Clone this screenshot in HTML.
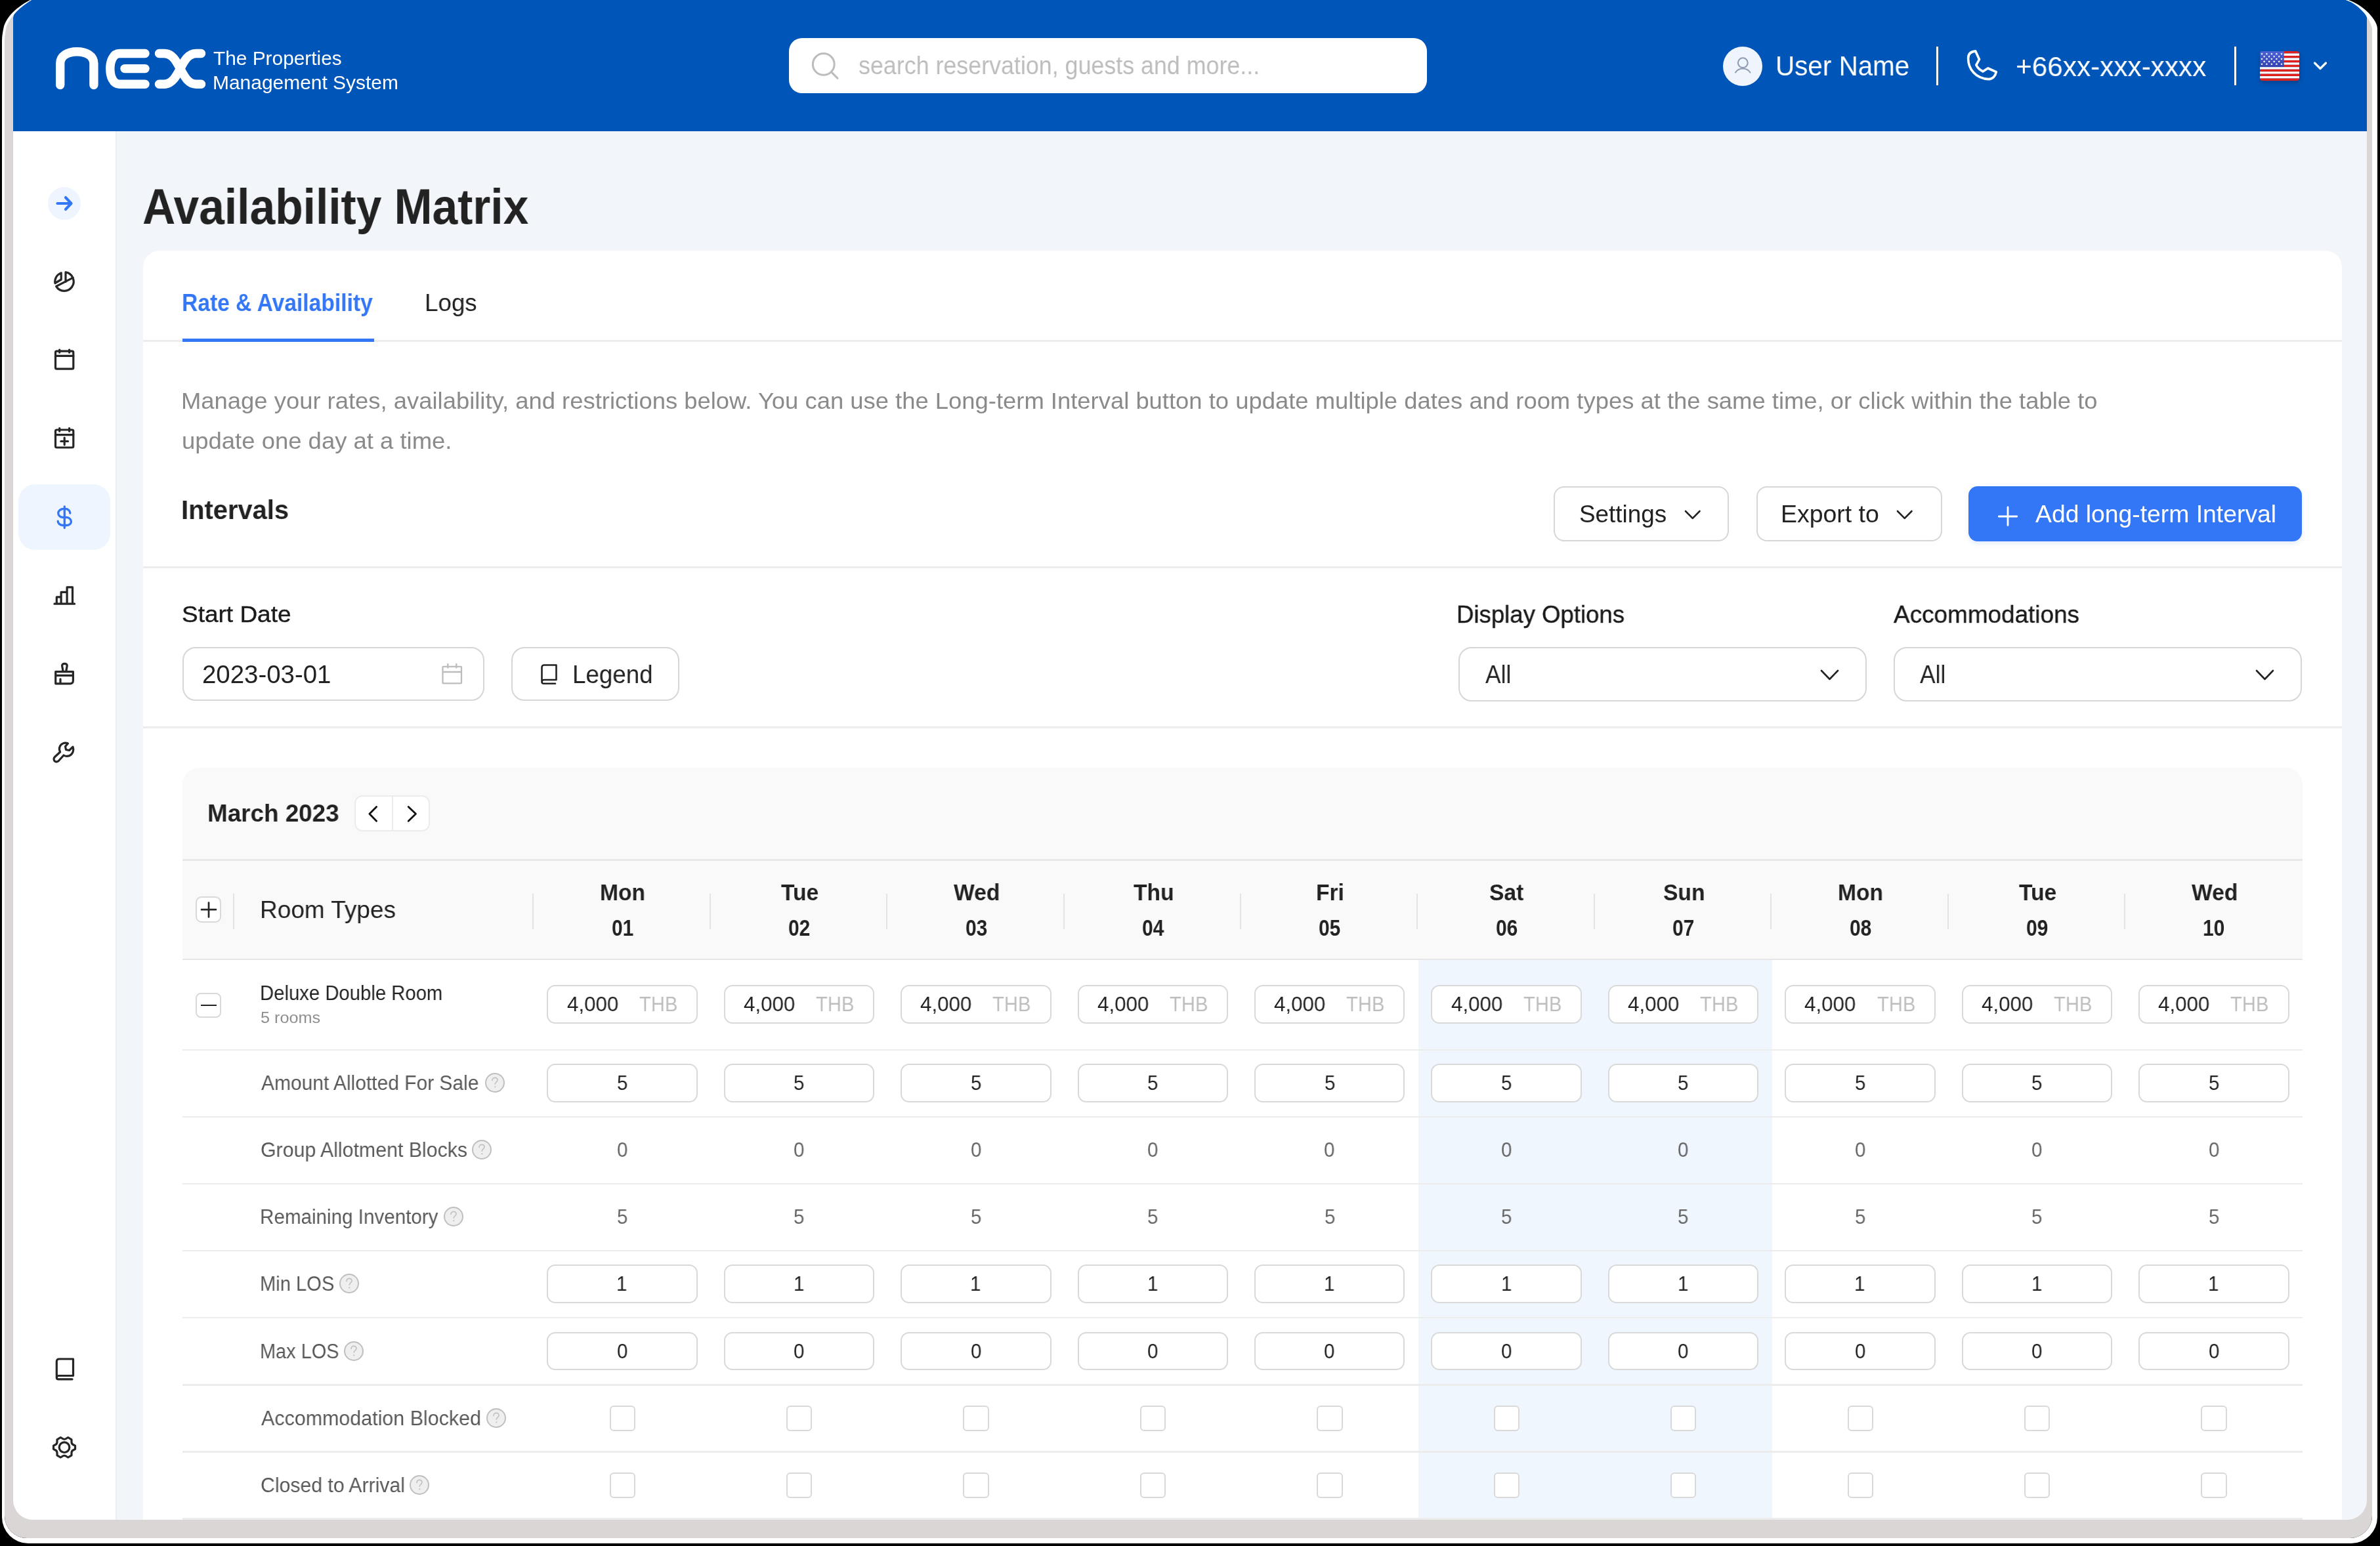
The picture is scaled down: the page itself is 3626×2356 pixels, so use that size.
<!DOCTYPE html>
<html><head><meta charset="utf-8"><style>
html,body{margin:0;padding:0}
body{width:3626px;height:2356px;position:relative;overflow:hidden;background:#000;font-family:"Liberation Sans",sans-serif}
.t{position:absolute;white-space:nowrap;line-height:1;transform-origin:0 0;will-change:transform}
</style></head><body>
<div style="position:absolute;left:20.00px;top:0.00px;width:3586.00px;height:200.00px;background:#0055b8"></div>
<div style="position:absolute;left:20.00px;top:200.00px;width:155.50px;height:2116.00px;background:#fff"></div>
<div style="position:absolute;left:175.50px;top:200.00px;width:2.50px;height:2116.00px;background:#eeeeee"></div>
<div style="position:absolute;left:178.00px;top:200.00px;width:3428.00px;height:2116.00px;background:#f2f5f9"></div>
<svg style="position:absolute;left:0;top:0" width="340" height="200" viewBox="0 0 340 200">
<g fill="none" stroke="#fff" stroke-width="13.4" stroke-linecap="round" stroke-linejoin="round">
<path d="M91.7 129.5 V97 C91.7 85 103 78.7 117.2 78.7 C131.5 78.7 142.9 85 142.9 97 V129.5"/>
<path d="M221 81.5 H182 C172 81.5 167.8 94 167.8 104.8 C167.8 116 172 128.2 182 128.2 H221"/>
<path d="M190 104.6 H221"/>
<path d="M242.5 81.5 H250 C262 81.5 268 92 274.6 104.8 C281 117 287 128.2 299 128.2 H306.5"/>
<path d="M306.5 81.5 H299 C287 81.5 281 92 274.6 104.8 C268 117 262 128.2 250 128.2 H242.5"/>
</g></svg>
<div class="t" style="left:325.49px;top:73.82px;font-size:29.28px;color:#fff;transform:scaleX(1.0197);">The Properties</div>
<div class="t" style="left:323.70px;top:110.82px;font-size:29.28px;color:#fff;transform:scaleX(1.0230);">Management System</div>
<div style="position:absolute;left:1202.00px;top:58.00px;width:972.00px;height:84.00px;background:#fff;border-radius:20px"></div>
<svg style="position:absolute;left:1230px;top:74px" width="54" height="54" viewBox="0 0 54 54">
<circle cx="24.75" cy="23.9" r="16.4" fill="none" stroke="#bdbdbd" stroke-width="3.1"/>
<path d="M36.4 35.6 L45.9 45.1" stroke="#bdbdbd" stroke-width="3.1" stroke-linecap="round"/></svg>
<div class="t" style="left:1307.57px;top:81.26px;font-size:38.41px;color:#bdbdbd;transform:scaleX(0.9326);">search reservation, guests and more...</div>
<div style="position:absolute;left:2625.30px;top:70.50px;width:60.00px;height:60.00px;background:#f0f4fd;border-radius:50%"></div>
<svg style="position:absolute;left:2635px;top:80px" width="40" height="40" viewBox="0 0 40 40">
<circle cx="20.3" cy="15.7" r="7.4" fill="none" stroke="#8e9db0" stroke-width="2.1"/>
<path d="M9 30.5 C12 26 15.5 24.5 20.3 24.5 C25 24.5 28.5 26 31.5 30.5" fill="none" stroke="#8e9db0" stroke-width="2.1" stroke-linecap="round"/></svg>
<div class="t" style="left:2705.08px;top:80.48px;font-size:42.03px;color:#fff;transform:scaleX(0.9612);">User Name</div>
<div style="position:absolute;left:2949.50px;top:71.00px;width:3.00px;height:59.00px;background:#fff"></div>
<svg style="position:absolute;left:2980px;top:60px" width="100" height="80" viewBox="0 0 100 80">
<path d="M29.8 17.9 L35.5 30.5 L30.8 39.1 C33 44 37 47 40.9 48.9 L48.7 44 L61.3 49.7 C60 56 56 60.6 49.7 60.6 C30 60 18.6 45 18.6 29 C18.6 22 23 18.5 29.8 17.9 Z" fill="none" stroke="#fff" stroke-width="3.6" stroke-linejoin="round"/></svg>
<div class="t" style="left:3070.82px;top:79.56px;font-size:42.75px;color:#fff;transform:scaleX(0.9895);">+66xx-xxx-xxxx</div>
<div style="position:absolute;left:3403.50px;top:71.00px;width:3.00px;height:59.00px;background:#fff"></div>
<div style="position:absolute;left:3443px;top:78px;width:60px;height:45px;border-radius:4px;overflow:hidden;box-shadow:0 3px 6px rgba(0,0,0,0.25)">
<svg width="60" height="45" viewBox="0 0 60 45"><rect x="0" y="0.000" width="60" height="3.512" fill="#e0201c"/><rect x="0" y="3.462" width="60" height="3.512" fill="#fff"/><rect x="0" y="6.923" width="60" height="3.512" fill="#e0201c"/><rect x="0" y="10.385" width="60" height="3.512" fill="#fff"/><rect x="0" y="13.846" width="60" height="3.512" fill="#e0201c"/><rect x="0" y="17.308" width="60" height="3.512" fill="#fff"/><rect x="0" y="20.769" width="60" height="3.512" fill="#e0201c"/><rect x="0" y="24.231" width="60" height="3.512" fill="#fff"/><rect x="0" y="27.692" width="60" height="3.512" fill="#e0201c"/><rect x="0" y="31.154" width="60" height="3.512" fill="#fff"/><rect x="0" y="34.615" width="60" height="3.512" fill="#e0201c"/><rect x="0" y="38.077" width="60" height="3.512" fill="#fff"/><rect x="0" y="41.538" width="60" height="3.512" fill="#e0201c"/><defs><linearGradient id="cg" x1="0" y1="0" x2="0" y2="1"><stop offset="0" stop-color="#4b62d4"/><stop offset="1" stop-color="#3542b0"/></linearGradient></defs><rect x="0" y="0" width="36.7" height="24" fill="url(#cg)"/><polygon points="3.00,2.30 3.50,3.51 4.81,3.61 3.81,4.46 4.12,5.74 3.00,5.05 1.88,5.74 2.19,4.46 1.19,3.61 2.50,3.51" fill="#fff"/><polygon points="10.40,2.30 10.90,3.51 12.21,3.61 11.21,4.46 11.52,5.74 10.40,5.05 9.28,5.74 9.59,4.46 8.59,3.61 9.90,3.51" fill="#fff"/><polygon points="17.90,2.30 18.40,3.51 19.71,3.61 18.71,4.46 19.02,5.74 17.90,5.05 16.78,5.74 17.09,4.46 16.09,3.61 17.40,3.51" fill="#fff"/><polygon points="25.40,2.30 25.90,3.51 27.21,3.61 26.21,4.46 26.52,5.74 25.40,5.05 24.28,5.74 24.59,4.46 23.59,3.61 24.90,3.51" fill="#fff"/><polygon points="33.00,2.30 33.50,3.51 34.81,3.61 33.81,4.46 34.12,5.74 33.00,5.05 31.88,5.74 32.19,4.46 31.19,3.61 32.50,3.51" fill="#fff"/><polygon points="6.60,6.20 7.10,7.41 8.41,7.51 7.41,8.36 7.72,9.64 6.60,8.96 5.48,9.64 5.79,8.36 4.79,7.51 6.10,7.41" fill="#fff"/><polygon points="14.10,6.20 14.60,7.41 15.91,7.51 14.91,8.36 15.22,9.64 14.10,8.96 12.98,9.64 13.29,8.36 12.29,7.51 13.60,7.41" fill="#fff"/><polygon points="21.70,6.20 22.20,7.41 23.51,7.51 22.51,8.36 22.82,9.64 21.70,8.96 20.58,9.64 20.89,8.36 19.89,7.51 21.20,7.41" fill="#fff"/><polygon points="29.20,6.20 29.70,7.41 31.01,7.51 30.01,8.36 30.32,9.64 29.20,8.96 28.08,9.64 28.39,8.36 27.39,7.51 28.70,7.41" fill="#fff"/><polygon points="3.00,10.00 3.50,11.21 4.81,11.31 3.81,12.16 4.12,13.44 3.00,12.76 1.88,13.44 2.19,12.16 1.19,11.31 2.50,11.21" fill="#fff"/><polygon points="10.40,10.00 10.90,11.21 12.21,11.31 11.21,12.16 11.52,13.44 10.40,12.76 9.28,13.44 9.59,12.16 8.59,11.31 9.90,11.21" fill="#fff"/><polygon points="17.90,10.00 18.40,11.21 19.71,11.31 18.71,12.16 19.02,13.44 17.90,12.76 16.78,13.44 17.09,12.16 16.09,11.31 17.40,11.21" fill="#fff"/><polygon points="25.40,10.00 25.90,11.21 27.21,11.31 26.21,12.16 26.52,13.44 25.40,12.76 24.28,13.44 24.59,12.16 23.59,11.31 24.90,11.21" fill="#fff"/><polygon points="33.00,10.00 33.50,11.21 34.81,11.31 33.81,12.16 34.12,13.44 33.00,12.76 31.88,13.44 32.19,12.16 31.19,11.31 32.50,11.21" fill="#fff"/><polygon points="6.60,13.90 7.10,15.11 8.41,15.21 7.41,16.06 7.72,17.34 6.60,16.66 5.48,17.34 5.79,16.06 4.79,15.21 6.10,15.11" fill="#fff"/><polygon points="14.10,13.90 14.60,15.11 15.91,15.21 14.91,16.06 15.22,17.34 14.10,16.66 12.98,17.34 13.29,16.06 12.29,15.21 13.60,15.11" fill="#fff"/><polygon points="21.70,13.90 22.20,15.11 23.51,15.21 22.51,16.06 22.82,17.34 21.70,16.66 20.58,17.34 20.89,16.06 19.89,15.21 21.20,15.11" fill="#fff"/><polygon points="29.20,13.90 29.70,15.11 31.01,15.21 30.01,16.06 30.32,17.34 29.20,16.66 28.08,17.34 28.39,16.06 27.39,15.21 28.70,15.11" fill="#fff"/><polygon points="3.00,17.70 3.50,18.91 4.81,19.01 3.81,19.86 4.12,21.14 3.00,20.46 1.88,21.14 2.19,19.86 1.19,19.01 2.50,18.91" fill="#fff"/><polygon points="10.40,17.70 10.90,18.91 12.21,19.01 11.21,19.86 11.52,21.14 10.40,20.46 9.28,21.14 9.59,19.86 8.59,19.01 9.90,18.91" fill="#fff"/><polygon points="17.90,17.70 18.40,18.91 19.71,19.01 18.71,19.86 19.02,21.14 17.90,20.46 16.78,21.14 17.09,19.86 16.09,19.01 17.40,18.91" fill="#fff"/><polygon points="25.40,17.70 25.90,18.91 27.21,19.01 26.21,19.86 26.52,21.14 25.40,20.46 24.28,21.14 24.59,19.86 23.59,19.01 24.90,18.91" fill="#fff"/><polygon points="33.00,17.70 33.50,18.91 34.81,19.01 33.81,19.86 34.12,21.14 33.00,20.46 31.88,21.14 32.19,19.86 31.19,19.01 32.50,18.91" fill="#fff"/></svg></div>
<svg style="position:absolute;left:3520px;top:88px" width="30" height="24" viewBox="0 0 30 24">
<path d="M6.5 8 L15 16.5 L23.5 8" fill="none" stroke="#fff" stroke-width="3.2" stroke-linecap="round" stroke-linejoin="round"/></svg>
<div style="position:absolute;left:73.30px;top:285.00px;width:50.00px;height:50.00px;background:#eef5fe;border-radius:50%"></div>
<svg style="position:absolute;left:78px;top:290px" width="40" height="40" viewBox="0 0 40 40">
<path d="M9.5 20 H30.5 M22 11 L30.5 20 L22 29" fill="none" stroke="#3377f6" stroke-width="4.2" stroke-linecap="round" stroke-linejoin="round"/></svg>
<svg style="position:absolute;left:74px;top:405px" width="48" height="48" viewBox="0 0 48 48"><g fill="none" stroke="#262626" stroke-width="3.2" stroke-linecap="round" stroke-linejoin="round"><path d="M26 9.9 A14.3 14.3 0 1 1 11.6 31.4 L37.3 18.1 M26 9.9 V24.4"/><path d="M19.2 10.9 V21 L9.9 26.5 A14.3 14.3 0 0 1 19.2 10.9 Z"/></g></svg>
<svg style="position:absolute;left:74px;top:524px" width="48" height="48" viewBox="0 0 48 48"><g fill="none" stroke="#262626" stroke-width="3.2" stroke-linecap="round" stroke-linejoin="round"><rect x="10.5" y="11.2" width="27.3" height="27" rx="2"/><path d="M10.5 18.4 H37.8 M16.7 9 V13.2 M31.6 9 V13.2"/></g></svg>
<svg style="position:absolute;left:74px;top:644px" width="48" height="48" viewBox="0 0 48 48"><g fill="none" stroke="#262626" stroke-width="3.2" stroke-linecap="round" stroke-linejoin="round"><rect x="10.5" y="11" width="27.3" height="27" rx="2"/><path d="M10.5 18.6 H37.8 M16.7 8.6 V13.2 M31.6 8.6 V13.2 M24.2 23.2 V33.8 M18.8 28.5 H29.6"/></g></svg>
<div style="position:absolute;left:28.00px;top:738.00px;width:140.00px;height:100.00px;background:#eef5fe;border-radius:26px"></div>
<svg style="position:absolute;left:74px;top:764px" width="48" height="48" viewBox="0 0 48 48"><g fill="none" stroke="#3377f6" stroke-width="3.3" stroke-linecap="round" stroke-linejoin="round">
<path d="M32.8 18.1 C32.8 14.4 29.5 11.4 25.6 11.4 H23 C18.6 11.4 14.7 14.4 14.7 18.1 C14.7 21.6 18 24.3 21.2 24.3 H27.4 C31.2 24.3 34.4 27.5 34.4 31 C34.4 34.2 31.2 36.5 27.4 36.5 H21.2 C17.5 36.5 14.2 33.5 14.2 30.2 M24.3 7.8 V40.5"/></g></svg>
<svg style="position:absolute;left:74px;top:883px" width="48" height="48" viewBox="0 0 48 48"><g fill="none" stroke="#262626" stroke-width="3.2" stroke-linecap="round" stroke-linejoin="round"><path d="M9 37.2 H39.5 M12.3 37.2 V26.9 H19.1 V37.2 M19.1 37.2 V19.4 H28.1 V37.2 M28.1 37.2 V11.9 H36.5 V37.2"/></g></svg>
<svg style="position:absolute;left:74px;top:1002px" width="48" height="48" viewBox="0 0 48 48"><g fill="none" stroke="#262626" stroke-width="3.2" stroke-linecap="round" stroke-linejoin="round"><path d="M10.7 21.6 H37.4 V35.3 C37.4 38 35.6 39.8 33 39.8 H10.7 Z M10.7 27.3 H37.4 M18 39.8 V32.8 M22.2 21.6 L20.6 12.8 C20.4 10.5 22 9.3 24.4 9.3 C26.8 9.3 28.4 10.5 28.2 12.8 L26.6 21.6"/></g></svg>
<svg style="position:absolute;left:74px;top:1122px" width="48" height="48" viewBox="0 0 48 48"><g fill="none" stroke="#262626" stroke-width="3.2" stroke-linecap="round" stroke-linejoin="round"><path d="M29.5 11 C24.5 9 19 11 17 16 C16 18.8 16.3 21.5 17.6 24 L9.5 31.5 C7.5 33.3 7.5 36 9.3 37.8 C11 39.5 13.8 39.3 15.5 37.3 L23 29 C25.5 30.5 29 30.8 32 29.5 C37 27.2 39 21 37 16.2 L31.5 21.5 L26.5 20.5 L25.5 15.5 Z"/></g></svg>
<svg style="position:absolute;left:74px;top:2062px" width="48" height="48" viewBox="0 0 48 48"><g fill="none" stroke="#262626" stroke-width="3.2" stroke-linecap="round" stroke-linejoin="round"><path d="M12.3 37 V12.5 C12.3 10.5 14 9 16 9 H37.5 V34.5 H15.5 C13.5 34.5 12.3 35.8 12.3 37.5 C12.3 39 13.5 39.8 15 39.8 H36"/></g></svg>
<svg style="position:absolute;left:74px;top:2182px" width="48" height="48" viewBox="0 0 48 48"><g fill="none" stroke="#262626" stroke-width="3.2" stroke-linecap="round" stroke-linejoin="round"><circle cx="24" cy="23.7" r="7.8"/><path d="M18.3 8.5 L21.5 10.5 Q24 12 26.5 10.5 L29.7 8.5 L35 11.8 L35 15.5 Q35 18.3 37.3 19.5 L40.5 21.2 V26.3 L37.3 28 Q35 29.3 35 32 L35 35.8 L29.7 39 L26.5 37 Q24 35.5 21.5 37 L18.3 39 L13 35.8 L13 32 Q13 29.3 10.7 28 L7.5 26.3 V21.2 L10.7 19.5 Q13 18.3 13 15.5 L13 11.8 Z"/></g></svg>
<div class="t" style="left:217.49px;top:276.11px;font-size:76.81px;color:#222;font-weight:700;transform:scaleX(0.9048);">Availability Matrix</div>
<div style="position:absolute;left:218.00px;top:381.50px;width:3350.00px;height:2018.50px;background:#fff;border-radius:25px"></div>
<div class="t" style="left:276.77px;top:443.37px;font-size:37.68px;color:#3377f6;font-weight:700;transform:scaleX(0.8920);">Rate &amp; Availability</div>
<div class="t" style="left:647.47px;top:443.37px;font-size:37.68px;color:#222;transform:scaleX(0.9755);">Logs</div>
<div style="position:absolute;left:218.00px;top:518.00px;width:3350.00px;height:3.00px;background:#ececec"></div>
<div style="position:absolute;left:278.00px;top:516.30px;width:291.50px;height:5.00px;background:#3377f6"></div>
<div class="t" style="left:276.12px;top:594.43px;font-size:34.78px;color:#8a8a8a;transform:scaleX(1.0472);">Manage your rates, availability, and restrictions below. You can use the Long-term Interval button to update multiple dates and room types at the same time, or click within the table to</div>
<div class="t" style="left:276.64px;top:654.83px;font-size:34.78px;color:#8a8a8a;transform:scaleX(1.0487);">update one day at a time.</div>
<div class="t" style="left:276.35px;top:756.79px;font-size:41.30px;color:#222;font-weight:700;transform:scaleX(0.9652);">Intervals</div>
<div style="position:absolute;left:2366.60px;top:741.30px;width:267.70px;height:83.60px;border:2.5px solid #d6d6d6;border-radius:16px;box-sizing:border-box;background:#fff"></div>
<div class="t" style="left:2405.82px;top:765.90px;font-size:36.23px;color:#222;transform:scaleX(1.0176);">Settings</div>
<svg style="position:absolute;left:2563.6px;top:774.7px" width="29.5" height="18.8" viewBox="0 0 29.5 18.8"><path d="M4 4 L14.75 14.8 L25.5 4" fill="none" stroke="#222" stroke-width="2.6" stroke-linecap="round" stroke-linejoin="round"/></svg>
<div style="position:absolute;left:2675.80px;top:741.30px;width:282.90px;height:83.60px;border:2.5px solid #d6d6d6;border-radius:16px;box-sizing:border-box;background:#fff"></div>
<div class="t" style="left:2712.90px;top:765.90px;font-size:36.23px;color:#222;transform:scaleX(1.0337);">Export to</div>
<svg style="position:absolute;left:2887.4px;top:774.7px" width="29.5" height="18.8" viewBox="0 0 29.5 18.8"><path d="M4 4 L14.75 14.8 L25.5 4" fill="none" stroke="#222" stroke-width="2.6" stroke-linecap="round" stroke-linejoin="round"/></svg>
<div style="position:absolute;left:2999.00px;top:741.30px;width:508.00px;height:83.60px;background:#3377f6;border-radius:14px;box-shadow:0 4px 6px rgba(51,119,246,0.12)"></div>
<svg style="position:absolute;left:3041px;top:768.5px" width="36" height="36" viewBox="0 0 36 36"><path d="M18 4 V31.5 M4.3 18 H31.8" stroke="#fff" stroke-width="2.8" stroke-linecap="round"/></svg>
<div class="t" style="left:3101.00px;top:765.90px;font-size:36.23px;color:#fff;transform:scaleX(1.0303);">Add long-term Interval</div>
<div style="position:absolute;left:218.00px;top:863.00px;width:3350.00px;height:2.50px;background:#ececec"></div>
<div class="t" style="left:277.14px;top:918.52px;font-size:35.51px;color:#1a1a1a;transform:scaleX(1.0418);-webkit-text-stroke:0.4px #1a1a1a;">Start Date</div>
<div style="position:absolute;left:278.30px;top:985.90px;width:459.50px;height:82.40px;border:2.5px solid #d6d6d6;border-radius:20px;box-sizing:border-box;background:#fff"></div>
<div class="t" style="left:307.69px;top:1008.88px;font-size:38.26px;color:#222;transform:scaleX(1.0042);">2023-03-01</div>
<svg style="position:absolute;left:668px;top:1006px" width="42" height="42" viewBox="0 0 42 42"><g fill="none" stroke="#bdbdbd" stroke-width="2.3"><rect x="6.5" y="9.8" width="28.5" height="25.5" rx="0.8"/><path d="M6.5 18 H35 M14.3 5 V12.5 M27.3 5 V12.5"/></g></svg>
<div style="position:absolute;left:779.40px;top:985.90px;width:255.20px;height:82.40px;border:2.5px solid #d6d6d6;border-radius:20px;box-sizing:border-box;background:#fff"></div>
<svg style="position:absolute;left:820px;top:1008px" width="34" height="40" viewBox="0 0 34 40"><g fill="none" stroke="#222" stroke-width="2.6" stroke-linecap="round" stroke-linejoin="round"><path d="M5.5 31 V9 C5.5 7 7 5.5 9 5.5 H27.5 V28 H9 C7 28 5.5 29.3 5.5 31 C5.5 32.8 7 33.8 8.5 33.8 H26"/></g></svg>
<div class="t" style="left:872.12px;top:1008.88px;font-size:38.26px;color:#222;transform:scaleX(0.9615);">Legend</div>
<div class="t" style="left:2219.49px;top:917.67px;font-size:37.68px;color:#1a1a1a;transform:scaleX(0.9704);-webkit-text-stroke:0.4px #1a1a1a;">Display Options</div>
<div style="position:absolute;left:2222.40px;top:985.90px;width:621.60px;height:83.50px;border:2.5px solid #d6d6d6;border-radius:20px;box-sizing:border-box;background:#fff"></div>
<div class="t" style="left:2263.00px;top:1008.68px;font-size:38.26px;color:#222;transform:scaleX(0.9250);">All</div>
<svg style="position:absolute;left:2771.1px;top:1017.5px" width="33" height="21" viewBox="0 0 33 21"><path d="M4 4 L16.5 17 L29 4" fill="none" stroke="#222" stroke-width="2.6" stroke-linecap="round" stroke-linejoin="round"/></svg>
<div class="t" style="left:2885.30px;top:917.67px;font-size:37.68px;color:#1a1a1a;transform:scaleX(0.9794);-webkit-text-stroke:0.4px #1a1a1a;">Accommodations</div>
<div style="position:absolute;left:2885.30px;top:985.90px;width:621.70px;height:83.50px;border:2.5px solid #d6d6d6;border-radius:20px;box-sizing:border-box;background:#fff"></div>
<div class="t" style="left:2925.30px;top:1008.68px;font-size:38.26px;color:#222;transform:scaleX(0.9250);">All</div>
<svg style="position:absolute;left:3434.0px;top:1017.5px" width="33" height="21" viewBox="0 0 33 21"><path d="M4 4 L16.5 17 L29 4" fill="none" stroke="#222" stroke-width="2.6" stroke-linecap="round" stroke-linejoin="round"/></svg>
<div style="position:absolute;left:218.00px;top:1107.00px;width:3350.00px;height:2.50px;background:#ececec"></div>
<div style="position:absolute;left:278.00px;top:1169.70px;width:3229.70px;height:292.30px;background:#f9f9f9;border-radius:25px 25px 0 0"></div>
<div class="t" style="left:316.06px;top:1221.07px;font-size:37.68px;color:#222;font-weight:700;transform:scaleX(0.9777);">March 2023</div>
<div style="position:absolute;left:540.30px;top:1211.50px;width:114.70px;height:55.50px;background:#fff;border:2.2px solid #ececec;border-radius:12px;box-sizing:border-box"></div>
<div style="position:absolute;left:596.90px;top:1213.00px;width:2.00px;height:52.50px;background:#ececec"></div>
<svg style="position:absolute;left:554px;top:1222px" width="28" height="38" viewBox="0 0 28 38"><path d="M19.6 7.4 L8.9 18.3 L19.6 29.2" fill="none" stroke="#111" stroke-width="2.8" stroke-linecap="round" stroke-linejoin="round"/></svg>
<svg style="position:absolute;left:613.5px;top:1222px" width="28" height="38" viewBox="0 0 28 38"><path d="M8.2 7.4 L19.5 18.3 L8.2 29.2" fill="none" stroke="#111" stroke-width="2.8" stroke-linecap="round" stroke-linejoin="round"/></svg>
<div style="position:absolute;left:278.00px;top:1309.00px;width:3229.70px;height:2.50px;background:#e8e8e8"></div>
<div style="position:absolute;left:297.80px;top:1366.30px;width:39.10px;height:39.50px;background:#fff;border:2.3px solid #d9d9d9;border-radius:9px;box-sizing:border-box"></div>
<svg style="position:absolute;left:298.5px;top:1367px" width="38" height="38" viewBox="0 0 38 38"><path d="M19 8.5 V30.5 M8 19.2 H30" stroke="#262626" stroke-width="2.7" stroke-linecap="round"/></svg>
<div style="position:absolute;left:355.00px;top:1362.00px;width:2.00px;height:54.00px;background:#e3e3e3"></div>
<div class="t" style="left:395.55px;top:1368.07px;font-size:37.68px;color:#222;transform:scaleX(0.9819);">Room Types</div>
<div style="position:absolute;left:811.35px;top:1362.00px;width:2.00px;height:54.00px;background:#e3e3e3"></div>
<div style="position:absolute;left:1080.77px;top:1362.00px;width:2.00px;height:54.00px;background:#e3e3e3"></div>
<div style="position:absolute;left:1350.19px;top:1362.00px;width:2.00px;height:54.00px;background:#e3e3e3"></div>
<div style="position:absolute;left:1619.61px;top:1362.00px;width:2.00px;height:54.00px;background:#e3e3e3"></div>
<div style="position:absolute;left:1889.03px;top:1362.00px;width:2.00px;height:54.00px;background:#e3e3e3"></div>
<div style="position:absolute;left:2158.45px;top:1362.00px;width:2.00px;height:54.00px;background:#e3e3e3"></div>
<div style="position:absolute;left:2427.87px;top:1362.00px;width:2.00px;height:54.00px;background:#e3e3e3"></div>
<div style="position:absolute;left:2697.29px;top:1362.00px;width:2.00px;height:54.00px;background:#e3e3e3"></div>
<div style="position:absolute;left:2966.71px;top:1362.00px;width:2.00px;height:54.00px;background:#e3e3e3"></div>
<div style="position:absolute;left:3236.13px;top:1362.00px;width:2.00px;height:54.00px;background:#e3e3e3"></div>
<div style="position:absolute;left:2160.75px;top:1463.00px;width:538.84px;height:853.00px;background:#eff6fe"></div>
<div class="t" style="left:914.00px;top:1341.64px;font-size:35.36px;color:#222;font-weight:700;transform:scaleX(0.9500);">Mon</div>
<div class="t" style="left:931.55px;top:1396.60px;font-size:35.65px;color:#222;font-weight:700;transform:scaleX(0.8400);">01</div>
<div class="t" style="left:1189.84px;top:1341.64px;font-size:35.36px;color:#222;font-weight:700;transform:scaleX(0.9500);">Tue</div>
<div class="t" style="left:1201.18px;top:1396.60px;font-size:35.65px;color:#222;font-weight:700;transform:scaleX(0.8400);">02</div>
<div class="t" style="left:1453.44px;top:1341.64px;font-size:35.36px;color:#222;font-weight:700;transform:scaleX(0.9500);">Wed</div>
<div class="t" style="left:1470.60px;top:1396.60px;font-size:35.65px;color:#222;font-weight:700;transform:scaleX(0.8400);">03</div>
<div class="t" style="left:1727.13px;top:1341.64px;font-size:35.36px;color:#222;font-weight:700;transform:scaleX(0.9500);">Thu</div>
<div class="t" style="left:1739.50px;top:1396.60px;font-size:35.65px;color:#222;font-weight:700;transform:scaleX(0.8400);">04</div>
<div class="t" style="left:2004.98px;top:1341.64px;font-size:35.36px;color:#222;font-weight:700;transform:scaleX(0.9500);">Fri</div>
<div class="t" style="left:2009.23px;top:1396.60px;font-size:35.65px;color:#222;font-weight:700;transform:scaleX(0.8400);">05</div>
<div class="t" style="left:2269.42px;top:1341.64px;font-size:35.36px;color:#222;font-weight:700;transform:scaleX(0.9500);">Sat</div>
<div class="t" style="left:2278.86px;top:1396.60px;font-size:35.65px;color:#222;font-weight:700;transform:scaleX(0.8400);">06</div>
<div class="t" style="left:2533.97px;top:1341.64px;font-size:35.36px;color:#222;font-weight:700;transform:scaleX(0.9500);">Sun</div>
<div class="t" style="left:2548.38px;top:1396.60px;font-size:35.65px;color:#222;font-weight:700;transform:scaleX(0.8400);">07</div>
<div class="t" style="left:2799.94px;top:1341.64px;font-size:35.36px;color:#222;font-weight:700;transform:scaleX(0.9500);">Mon</div>
<div class="t" style="left:2817.59px;top:1396.60px;font-size:35.65px;color:#222;font-weight:700;transform:scaleX(0.8400);">08</div>
<div class="t" style="left:3075.78px;top:1341.64px;font-size:35.36px;color:#222;font-weight:700;transform:scaleX(0.9500);">Tue</div>
<div class="t" style="left:3087.12px;top:1396.60px;font-size:35.65px;color:#222;font-weight:700;transform:scaleX(0.8400);">09</div>
<div class="t" style="left:3339.38px;top:1341.64px;font-size:35.36px;color:#222;font-weight:700;transform:scaleX(0.9500);">Wed</div>
<div class="t" style="left:3356.23px;top:1396.60px;font-size:35.65px;color:#222;font-weight:700;transform:scaleX(0.8400);">10</div>
<div style="position:absolute;left:278.00px;top:1461.00px;width:3229.70px;height:2.00px;background:#e6e6e6"></div>
<div style="position:absolute;left:278.00px;top:1598.50px;width:3229.70px;height:2.50px;background:#ececec"></div>
<div style="position:absolute;left:278.00px;top:1700.50px;width:3229.70px;height:2.50px;background:#ececec"></div>
<div style="position:absolute;left:278.00px;top:1802.60px;width:3229.70px;height:2.50px;background:#ececec"></div>
<div style="position:absolute;left:278.00px;top:1904.70px;width:3229.70px;height:2.50px;background:#ececec"></div>
<div style="position:absolute;left:278.00px;top:2006.70px;width:3229.70px;height:2.50px;background:#ececec"></div>
<div style="position:absolute;left:278.00px;top:2109.00px;width:3229.70px;height:2.50px;background:#ececec"></div>
<div style="position:absolute;left:278.00px;top:2211.20px;width:3229.70px;height:2.50px;background:#ececec"></div>
<div style="position:absolute;left:278.00px;top:2313.20px;width:3229.70px;height:2.50px;background:#ececec"></div>
<div style="position:absolute;left:297.90px;top:1512.70px;width:39.00px;height:38.30px;background:#fff;border:2px solid #d9d9d9;border-radius:8px;box-sizing:border-box"></div>
<div style="position:absolute;left:305.60px;top:1530.50px;width:24.20px;height:2.50px;background:#222"></div>
<div class="t" style="left:395.59px;top:1498.03px;font-size:30.43px;color:#222;transform:scaleX(0.9625);">Deluxe Double Room</div>
<div class="t" style="left:396.94px;top:1538.57px;font-size:23.91px;color:#8f8f8f;transform:scaleX(1.0553);">5 rooms</div>
<div class="t" style="left:398.00px;top:1635.04px;font-size:31.01px;color:#595959;transform:scaleX(0.9665);">Amount Allotted For Sale</div>
<svg style="position:absolute;left:737.8px;top:1634.2px" width="32" height="32" viewBox="0 0 32 32"><circle cx="16" cy="16" r="14" fill="#efefef" stroke="#bfbfbf" stroke-width="2"/><path d="M12 12.5 C12 9.8 13.8 8.3 16 8.3 C18.3 8.3 20 9.8 20 12 C20 14.5 16.3 15.3 16.3 18" fill="none" stroke="#c2c2c2" stroke-width="1.7" stroke-linecap="round"/><circle cx="16.3" cy="22.3" r="1.1" fill="#c2c2c2"/></svg>
<div class="t" style="left:396.53px;top:1736.94px;font-size:31.01px;color:#595959;transform:scaleX(0.9776);">Group Allotment Blocks</div>
<svg style="position:absolute;left:717.9px;top:1736.1px" width="32" height="32" viewBox="0 0 32 32"><circle cx="16" cy="16" r="14" fill="#efefef" stroke="#bfbfbf" stroke-width="2"/><path d="M12 12.5 C12 9.8 13.8 8.3 16 8.3 C18.3 8.3 20 9.8 20 12 C20 14.5 16.3 15.3 16.3 18" fill="none" stroke="#c2c2c2" stroke-width="1.7" stroke-linecap="round"/><circle cx="16.3" cy="22.3" r="1.1" fill="#c2c2c2"/></svg>
<div class="t" style="left:395.61px;top:1839.04px;font-size:31.01px;color:#595959;transform:scaleX(0.9547);">Remaining Inventory</div>
<svg style="position:absolute;left:675.3px;top:1838.2px" width="32" height="32" viewBox="0 0 32 32"><circle cx="16" cy="16" r="14" fill="#efefef" stroke="#bfbfbf" stroke-width="2"/><path d="M12 12.5 C12 9.8 13.8 8.3 16 8.3 C18.3 8.3 20 9.8 20 12 C20 14.5 16.3 15.3 16.3 18" fill="none" stroke="#c2c2c2" stroke-width="1.7" stroke-linecap="round"/><circle cx="16.3" cy="22.3" r="1.1" fill="#c2c2c2"/></svg>
<div class="t" style="left:395.65px;top:1941.14px;font-size:31.01px;color:#595959;transform:scaleX(0.9396);">Min LOS</div>
<svg style="position:absolute;left:515.9px;top:1940.3px" width="32" height="32" viewBox="0 0 32 32"><circle cx="16" cy="16" r="14" fill="#efefef" stroke="#bfbfbf" stroke-width="2"/><path d="M12 12.5 C12 9.8 13.8 8.3 16 8.3 C18.3 8.3 20 9.8 20 12 C20 14.5 16.3 15.3 16.3 18" fill="none" stroke="#c2c2c2" stroke-width="1.7" stroke-linecap="round"/><circle cx="16.3" cy="22.3" r="1.1" fill="#c2c2c2"/></svg>
<div class="t" style="left:395.67px;top:2043.64px;font-size:31.01px;color:#595959;transform:scaleX(0.9325);">Max LOS</div>
<svg style="position:absolute;left:523.3px;top:2042.8px" width="32" height="32" viewBox="0 0 32 32"><circle cx="16" cy="16" r="14" fill="#efefef" stroke="#bfbfbf" stroke-width="2"/><path d="M12 12.5 C12 9.8 13.8 8.3 16 8.3 C18.3 8.3 20 9.8 20 12 C20 14.5 16.3 15.3 16.3 18" fill="none" stroke="#c2c2c2" stroke-width="1.7" stroke-linecap="round"/><circle cx="16.3" cy="22.3" r="1.1" fill="#c2c2c2"/></svg>
<div class="t" style="left:398.00px;top:2145.54px;font-size:31.01px;color:#595959;transform:scaleX(0.9816);">Accommodation Blocked</div>
<svg style="position:absolute;left:739.9px;top:2144.7px" width="32" height="32" viewBox="0 0 32 32"><circle cx="16" cy="16" r="14" fill="#efefef" stroke="#bfbfbf" stroke-width="2"/><path d="M12 12.5 C12 9.8 13.8 8.3 16 8.3 C18.3 8.3 20 9.8 20 12 C20 14.5 16.3 15.3 16.3 18" fill="none" stroke="#c2c2c2" stroke-width="1.7" stroke-linecap="round"/><circle cx="16.3" cy="22.3" r="1.1" fill="#c2c2c2"/></svg>
<div class="t" style="left:396.54px;top:2248.04px;font-size:31.01px;color:#595959;transform:scaleX(0.9748);">Closed to Arrival</div>
<svg style="position:absolute;left:623.2px;top:2247.2px" width="32" height="32" viewBox="0 0 32 32"><circle cx="16" cy="16" r="14" fill="#efefef" stroke="#bfbfbf" stroke-width="2"/><path d="M12 12.5 C12 9.8 13.8 8.3 16 8.3 C18.3 8.3 20 9.8 20 12 C20 14.5 16.3 15.3 16.3 18" fill="none" stroke="#c2c2c2" stroke-width="1.7" stroke-linecap="round"/><circle cx="16.3" cy="22.3" r="1.1" fill="#c2c2c2"/></svg>
<div style="position:absolute;left:833.26px;top:1501.30px;width:229.50px;height:58.70px;background:#fff;border:2.5px solid #d9d9d9;border-radius:13px;box-sizing:border-box"></div>
<div class="t" style="left:863.51px;top:1514.87px;font-size:31.45px;color:#222;transform:scaleX(0.9941);">4,000</div>
<div class="t" style="left:973.56px;top:1514.87px;font-size:31.45px;color:#bdbdbd;transform:scaleX(0.9267);">THB</div>
<div style="position:absolute;left:833.26px;top:1621.20px;width:229.50px;height:58.60px;background:#fff;border:2.5px solid #d9d9d9;border-radius:13px;box-sizing:border-box"></div>
<div class="t" style="left:939.90px;top:1636.08px;font-size:30.72px;color:#222;transform:scaleX(0.9600);">5</div>
<div class="t" style="left:939.78px;top:1738.13px;font-size:30.72px;color:#666;transform:scaleX(0.9600);">0</div>
<div class="t" style="left:939.90px;top:1840.03px;font-size:30.72px;color:#666;transform:scaleX(0.9600);">5</div>
<div style="position:absolute;left:833.26px;top:1927.40px;width:229.50px;height:58.60px;background:#fff;border:2.5px solid #d9d9d9;border-radius:13px;box-sizing:border-box"></div>
<div class="t" style="left:939.42px;top:1942.28px;font-size:30.72px;color:#222;transform:scaleX(0.9600);">1</div>
<div style="position:absolute;left:833.26px;top:2029.55px;width:229.50px;height:58.60px;background:#fff;border:2.5px solid #d9d9d9;border-radius:13px;box-sizing:border-box"></div>
<div class="t" style="left:939.78px;top:2044.63px;font-size:30.72px;color:#222;transform:scaleX(0.9600);">0</div>
<div style="position:absolute;left:928.56px;top:2141.50px;width:39.40px;height:39.40px;background:#fff;border:2.5px solid #d9d9d9;border-radius:6px;box-sizing:border-box"></div>
<div style="position:absolute;left:928.56px;top:2243.60px;width:39.40px;height:39.40px;background:#fff;border:2.5px solid #d9d9d9;border-radius:6px;box-sizing:border-box"></div>
<div style="position:absolute;left:1102.68px;top:1501.30px;width:229.50px;height:58.70px;background:#fff;border:2.5px solid #d9d9d9;border-radius:13px;box-sizing:border-box"></div>
<div class="t" style="left:1132.93px;top:1514.87px;font-size:31.45px;color:#222;transform:scaleX(0.9941);">4,000</div>
<div class="t" style="left:1242.98px;top:1514.87px;font-size:31.45px;color:#bdbdbd;transform:scaleX(0.9267);">THB</div>
<div style="position:absolute;left:1102.68px;top:1621.20px;width:229.50px;height:58.60px;background:#fff;border:2.5px solid #d9d9d9;border-radius:13px;box-sizing:border-box"></div>
<div class="t" style="left:1209.32px;top:1636.08px;font-size:30.72px;color:#222;transform:scaleX(0.9600);">5</div>
<div class="t" style="left:1209.20px;top:1738.13px;font-size:30.72px;color:#666;transform:scaleX(0.9600);">0</div>
<div class="t" style="left:1209.32px;top:1840.03px;font-size:30.72px;color:#666;transform:scaleX(0.9600);">5</div>
<div style="position:absolute;left:1102.68px;top:1927.40px;width:229.50px;height:58.60px;background:#fff;border:2.5px solid #d9d9d9;border-radius:13px;box-sizing:border-box"></div>
<div class="t" style="left:1208.84px;top:1942.28px;font-size:30.72px;color:#222;transform:scaleX(0.9600);">1</div>
<div style="position:absolute;left:1102.68px;top:2029.55px;width:229.50px;height:58.60px;background:#fff;border:2.5px solid #d9d9d9;border-radius:13px;box-sizing:border-box"></div>
<div class="t" style="left:1209.20px;top:2044.63px;font-size:30.72px;color:#222;transform:scaleX(0.9600);">0</div>
<div style="position:absolute;left:1197.98px;top:2141.50px;width:39.40px;height:39.40px;background:#fff;border:2.5px solid #d9d9d9;border-radius:6px;box-sizing:border-box"></div>
<div style="position:absolute;left:1197.98px;top:2243.60px;width:39.40px;height:39.40px;background:#fff;border:2.5px solid #d9d9d9;border-radius:6px;box-sizing:border-box"></div>
<div style="position:absolute;left:1372.10px;top:1501.30px;width:229.50px;height:58.70px;background:#fff;border:2.5px solid #d9d9d9;border-radius:13px;box-sizing:border-box"></div>
<div class="t" style="left:1402.35px;top:1514.87px;font-size:31.45px;color:#222;transform:scaleX(0.9941);">4,000</div>
<div class="t" style="left:1512.40px;top:1514.87px;font-size:31.45px;color:#bdbdbd;transform:scaleX(0.9267);">THB</div>
<div style="position:absolute;left:1372.10px;top:1621.20px;width:229.50px;height:58.60px;background:#fff;border:2.5px solid #d9d9d9;border-radius:13px;box-sizing:border-box"></div>
<div class="t" style="left:1478.74px;top:1636.08px;font-size:30.72px;color:#222;transform:scaleX(0.9600);">5</div>
<div class="t" style="left:1478.62px;top:1738.13px;font-size:30.72px;color:#666;transform:scaleX(0.9600);">0</div>
<div class="t" style="left:1478.74px;top:1840.03px;font-size:30.72px;color:#666;transform:scaleX(0.9600);">5</div>
<div style="position:absolute;left:1372.10px;top:1927.40px;width:229.50px;height:58.60px;background:#fff;border:2.5px solid #d9d9d9;border-radius:13px;box-sizing:border-box"></div>
<div class="t" style="left:1478.26px;top:1942.28px;font-size:30.72px;color:#222;transform:scaleX(0.9600);">1</div>
<div style="position:absolute;left:1372.10px;top:2029.55px;width:229.50px;height:58.60px;background:#fff;border:2.5px solid #d9d9d9;border-radius:13px;box-sizing:border-box"></div>
<div class="t" style="left:1478.62px;top:2044.63px;font-size:30.72px;color:#222;transform:scaleX(0.9600);">0</div>
<div style="position:absolute;left:1467.40px;top:2141.50px;width:39.40px;height:39.40px;background:#fff;border:2.5px solid #d9d9d9;border-radius:6px;box-sizing:border-box"></div>
<div style="position:absolute;left:1467.40px;top:2243.60px;width:39.40px;height:39.40px;background:#fff;border:2.5px solid #d9d9d9;border-radius:6px;box-sizing:border-box"></div>
<div style="position:absolute;left:1641.52px;top:1501.30px;width:229.50px;height:58.70px;background:#fff;border:2.5px solid #d9d9d9;border-radius:13px;box-sizing:border-box"></div>
<div class="t" style="left:1671.77px;top:1514.87px;font-size:31.45px;color:#222;transform:scaleX(0.9941);">4,000</div>
<div class="t" style="left:1781.82px;top:1514.87px;font-size:31.45px;color:#bdbdbd;transform:scaleX(0.9267);">THB</div>
<div style="position:absolute;left:1641.52px;top:1621.20px;width:229.50px;height:58.60px;background:#fff;border:2.5px solid #d9d9d9;border-radius:13px;box-sizing:border-box"></div>
<div class="t" style="left:1748.16px;top:1636.08px;font-size:30.72px;color:#222;transform:scaleX(0.9600);">5</div>
<div class="t" style="left:1748.04px;top:1738.13px;font-size:30.72px;color:#666;transform:scaleX(0.9600);">0</div>
<div class="t" style="left:1748.16px;top:1840.03px;font-size:30.72px;color:#666;transform:scaleX(0.9600);">5</div>
<div style="position:absolute;left:1641.52px;top:1927.40px;width:229.50px;height:58.60px;background:#fff;border:2.5px solid #d9d9d9;border-radius:13px;box-sizing:border-box"></div>
<div class="t" style="left:1747.68px;top:1942.28px;font-size:30.72px;color:#222;transform:scaleX(0.9600);">1</div>
<div style="position:absolute;left:1641.52px;top:2029.55px;width:229.50px;height:58.60px;background:#fff;border:2.5px solid #d9d9d9;border-radius:13px;box-sizing:border-box"></div>
<div class="t" style="left:1748.04px;top:2044.63px;font-size:30.72px;color:#222;transform:scaleX(0.9600);">0</div>
<div style="position:absolute;left:1736.82px;top:2141.50px;width:39.40px;height:39.40px;background:#fff;border:2.5px solid #d9d9d9;border-radius:6px;box-sizing:border-box"></div>
<div style="position:absolute;left:1736.82px;top:2243.60px;width:39.40px;height:39.40px;background:#fff;border:2.5px solid #d9d9d9;border-radius:6px;box-sizing:border-box"></div>
<div style="position:absolute;left:1910.94px;top:1501.30px;width:229.50px;height:58.70px;background:#fff;border:2.5px solid #d9d9d9;border-radius:13px;box-sizing:border-box"></div>
<div class="t" style="left:1941.19px;top:1514.87px;font-size:31.45px;color:#222;transform:scaleX(0.9941);">4,000</div>
<div class="t" style="left:2051.24px;top:1514.87px;font-size:31.45px;color:#bdbdbd;transform:scaleX(0.9267);">THB</div>
<div style="position:absolute;left:1910.94px;top:1621.20px;width:229.50px;height:58.60px;background:#fff;border:2.5px solid #d9d9d9;border-radius:13px;box-sizing:border-box"></div>
<div class="t" style="left:2017.58px;top:1636.08px;font-size:30.72px;color:#222;transform:scaleX(0.9600);">5</div>
<div class="t" style="left:2017.46px;top:1738.13px;font-size:30.72px;color:#666;transform:scaleX(0.9600);">0</div>
<div class="t" style="left:2017.58px;top:1840.03px;font-size:30.72px;color:#666;transform:scaleX(0.9600);">5</div>
<div style="position:absolute;left:1910.94px;top:1927.40px;width:229.50px;height:58.60px;background:#fff;border:2.5px solid #d9d9d9;border-radius:13px;box-sizing:border-box"></div>
<div class="t" style="left:2017.10px;top:1942.28px;font-size:30.72px;color:#222;transform:scaleX(0.9600);">1</div>
<div style="position:absolute;left:1910.94px;top:2029.55px;width:229.50px;height:58.60px;background:#fff;border:2.5px solid #d9d9d9;border-radius:13px;box-sizing:border-box"></div>
<div class="t" style="left:2017.46px;top:2044.63px;font-size:30.72px;color:#222;transform:scaleX(0.9600);">0</div>
<div style="position:absolute;left:2006.24px;top:2141.50px;width:39.40px;height:39.40px;background:#fff;border:2.5px solid #d9d9d9;border-radius:6px;box-sizing:border-box"></div>
<div style="position:absolute;left:2006.24px;top:2243.60px;width:39.40px;height:39.40px;background:#fff;border:2.5px solid #d9d9d9;border-radius:6px;box-sizing:border-box"></div>
<div style="position:absolute;left:2180.36px;top:1501.30px;width:229.50px;height:58.70px;background:#fff;border:2.5px solid #d9d9d9;border-radius:13px;box-sizing:border-box"></div>
<div class="t" style="left:2210.61px;top:1514.87px;font-size:31.45px;color:#222;transform:scaleX(0.9941);">4,000</div>
<div class="t" style="left:2320.66px;top:1514.87px;font-size:31.45px;color:#bdbdbd;transform:scaleX(0.9267);">THB</div>
<div style="position:absolute;left:2180.36px;top:1621.20px;width:229.50px;height:58.60px;background:#fff;border:2.5px solid #d9d9d9;border-radius:13px;box-sizing:border-box"></div>
<div class="t" style="left:2287.00px;top:1636.08px;font-size:30.72px;color:#222;transform:scaleX(0.9600);">5</div>
<div class="t" style="left:2286.88px;top:1738.13px;font-size:30.72px;color:#666;transform:scaleX(0.9600);">0</div>
<div class="t" style="left:2287.00px;top:1840.03px;font-size:30.72px;color:#666;transform:scaleX(0.9600);">5</div>
<div style="position:absolute;left:2180.36px;top:1927.40px;width:229.50px;height:58.60px;background:#fff;border:2.5px solid #d9d9d9;border-radius:13px;box-sizing:border-box"></div>
<div class="t" style="left:2286.52px;top:1942.28px;font-size:30.72px;color:#222;transform:scaleX(0.9600);">1</div>
<div style="position:absolute;left:2180.36px;top:2029.55px;width:229.50px;height:58.60px;background:#fff;border:2.5px solid #d9d9d9;border-radius:13px;box-sizing:border-box"></div>
<div class="t" style="left:2286.88px;top:2044.63px;font-size:30.72px;color:#222;transform:scaleX(0.9600);">0</div>
<div style="position:absolute;left:2275.66px;top:2141.50px;width:39.40px;height:39.40px;background:#fff;border:2.5px solid #d9d9d9;border-radius:6px;box-sizing:border-box"></div>
<div style="position:absolute;left:2275.66px;top:2243.60px;width:39.40px;height:39.40px;background:#fff;border:2.5px solid #d9d9d9;border-radius:6px;box-sizing:border-box"></div>
<div style="position:absolute;left:2449.78px;top:1501.30px;width:229.50px;height:58.70px;background:#fff;border:2.5px solid #d9d9d9;border-radius:13px;box-sizing:border-box"></div>
<div class="t" style="left:2480.03px;top:1514.87px;font-size:31.45px;color:#222;transform:scaleX(0.9941);">4,000</div>
<div class="t" style="left:2590.08px;top:1514.87px;font-size:31.45px;color:#bdbdbd;transform:scaleX(0.9267);">THB</div>
<div style="position:absolute;left:2449.78px;top:1621.20px;width:229.50px;height:58.60px;background:#fff;border:2.5px solid #d9d9d9;border-radius:13px;box-sizing:border-box"></div>
<div class="t" style="left:2556.42px;top:1636.08px;font-size:30.72px;color:#222;transform:scaleX(0.9600);">5</div>
<div class="t" style="left:2556.30px;top:1738.13px;font-size:30.72px;color:#666;transform:scaleX(0.9600);">0</div>
<div class="t" style="left:2556.42px;top:1840.03px;font-size:30.72px;color:#666;transform:scaleX(0.9600);">5</div>
<div style="position:absolute;left:2449.78px;top:1927.40px;width:229.50px;height:58.60px;background:#fff;border:2.5px solid #d9d9d9;border-radius:13px;box-sizing:border-box"></div>
<div class="t" style="left:2555.94px;top:1942.28px;font-size:30.72px;color:#222;transform:scaleX(0.9600);">1</div>
<div style="position:absolute;left:2449.78px;top:2029.55px;width:229.50px;height:58.60px;background:#fff;border:2.5px solid #d9d9d9;border-radius:13px;box-sizing:border-box"></div>
<div class="t" style="left:2556.30px;top:2044.63px;font-size:30.72px;color:#222;transform:scaleX(0.9600);">0</div>
<div style="position:absolute;left:2545.08px;top:2141.50px;width:39.40px;height:39.40px;background:#fff;border:2.5px solid #d9d9d9;border-radius:6px;box-sizing:border-box"></div>
<div style="position:absolute;left:2545.08px;top:2243.60px;width:39.40px;height:39.40px;background:#fff;border:2.5px solid #d9d9d9;border-radius:6px;box-sizing:border-box"></div>
<div style="position:absolute;left:2719.20px;top:1501.30px;width:229.50px;height:58.70px;background:#fff;border:2.5px solid #d9d9d9;border-radius:13px;box-sizing:border-box"></div>
<div class="t" style="left:2749.45px;top:1514.87px;font-size:31.45px;color:#222;transform:scaleX(0.9941);">4,000</div>
<div class="t" style="left:2859.50px;top:1514.87px;font-size:31.45px;color:#bdbdbd;transform:scaleX(0.9267);">THB</div>
<div style="position:absolute;left:2719.20px;top:1621.20px;width:229.50px;height:58.60px;background:#fff;border:2.5px solid #d9d9d9;border-radius:13px;box-sizing:border-box"></div>
<div class="t" style="left:2825.84px;top:1636.08px;font-size:30.72px;color:#222;transform:scaleX(0.9600);">5</div>
<div class="t" style="left:2825.72px;top:1738.13px;font-size:30.72px;color:#666;transform:scaleX(0.9600);">0</div>
<div class="t" style="left:2825.84px;top:1840.03px;font-size:30.72px;color:#666;transform:scaleX(0.9600);">5</div>
<div style="position:absolute;left:2719.20px;top:1927.40px;width:229.50px;height:58.60px;background:#fff;border:2.5px solid #d9d9d9;border-radius:13px;box-sizing:border-box"></div>
<div class="t" style="left:2825.36px;top:1942.28px;font-size:30.72px;color:#222;transform:scaleX(0.9600);">1</div>
<div style="position:absolute;left:2719.20px;top:2029.55px;width:229.50px;height:58.60px;background:#fff;border:2.5px solid #d9d9d9;border-radius:13px;box-sizing:border-box"></div>
<div class="t" style="left:2825.72px;top:2044.63px;font-size:30.72px;color:#222;transform:scaleX(0.9600);">0</div>
<div style="position:absolute;left:2814.50px;top:2141.50px;width:39.40px;height:39.40px;background:#fff;border:2.5px solid #d9d9d9;border-radius:6px;box-sizing:border-box"></div>
<div style="position:absolute;left:2814.50px;top:2243.60px;width:39.40px;height:39.40px;background:#fff;border:2.5px solid #d9d9d9;border-radius:6px;box-sizing:border-box"></div>
<div style="position:absolute;left:2988.62px;top:1501.30px;width:229.50px;height:58.70px;background:#fff;border:2.5px solid #d9d9d9;border-radius:13px;box-sizing:border-box"></div>
<div class="t" style="left:3018.87px;top:1514.87px;font-size:31.45px;color:#222;transform:scaleX(0.9941);">4,000</div>
<div class="t" style="left:3128.92px;top:1514.87px;font-size:31.45px;color:#bdbdbd;transform:scaleX(0.9267);">THB</div>
<div style="position:absolute;left:2988.62px;top:1621.20px;width:229.50px;height:58.60px;background:#fff;border:2.5px solid #d9d9d9;border-radius:13px;box-sizing:border-box"></div>
<div class="t" style="left:3095.26px;top:1636.08px;font-size:30.72px;color:#222;transform:scaleX(0.9600);">5</div>
<div class="t" style="left:3095.14px;top:1738.13px;font-size:30.72px;color:#666;transform:scaleX(0.9600);">0</div>
<div class="t" style="left:3095.26px;top:1840.03px;font-size:30.72px;color:#666;transform:scaleX(0.9600);">5</div>
<div style="position:absolute;left:2988.62px;top:1927.40px;width:229.50px;height:58.60px;background:#fff;border:2.5px solid #d9d9d9;border-radius:13px;box-sizing:border-box"></div>
<div class="t" style="left:3094.78px;top:1942.28px;font-size:30.72px;color:#222;transform:scaleX(0.9600);">1</div>
<div style="position:absolute;left:2988.62px;top:2029.55px;width:229.50px;height:58.60px;background:#fff;border:2.5px solid #d9d9d9;border-radius:13px;box-sizing:border-box"></div>
<div class="t" style="left:3095.14px;top:2044.63px;font-size:30.72px;color:#222;transform:scaleX(0.9600);">0</div>
<div style="position:absolute;left:3083.92px;top:2141.50px;width:39.40px;height:39.40px;background:#fff;border:2.5px solid #d9d9d9;border-radius:6px;box-sizing:border-box"></div>
<div style="position:absolute;left:3083.92px;top:2243.60px;width:39.40px;height:39.40px;background:#fff;border:2.5px solid #d9d9d9;border-radius:6px;box-sizing:border-box"></div>
<div style="position:absolute;left:3258.04px;top:1501.30px;width:229.50px;height:58.70px;background:#fff;border:2.5px solid #d9d9d9;border-radius:13px;box-sizing:border-box"></div>
<div class="t" style="left:3288.29px;top:1514.87px;font-size:31.45px;color:#222;transform:scaleX(0.9941);">4,000</div>
<div class="t" style="left:3398.34px;top:1514.87px;font-size:31.45px;color:#bdbdbd;transform:scaleX(0.9267);">THB</div>
<div style="position:absolute;left:3258.04px;top:1621.20px;width:229.50px;height:58.60px;background:#fff;border:2.5px solid #d9d9d9;border-radius:13px;box-sizing:border-box"></div>
<div class="t" style="left:3364.68px;top:1636.08px;font-size:30.72px;color:#222;transform:scaleX(0.9600);">5</div>
<div class="t" style="left:3364.56px;top:1738.13px;font-size:30.72px;color:#666;transform:scaleX(0.9600);">0</div>
<div class="t" style="left:3364.68px;top:1840.03px;font-size:30.72px;color:#666;transform:scaleX(0.9600);">5</div>
<div style="position:absolute;left:3258.04px;top:1927.40px;width:229.50px;height:58.60px;background:#fff;border:2.5px solid #d9d9d9;border-radius:13px;box-sizing:border-box"></div>
<div class="t" style="left:3364.20px;top:1942.28px;font-size:30.72px;color:#222;transform:scaleX(0.9600);">1</div>
<div style="position:absolute;left:3258.04px;top:2029.55px;width:229.50px;height:58.60px;background:#fff;border:2.5px solid #d9d9d9;border-radius:13px;box-sizing:border-box"></div>
<div class="t" style="left:3364.56px;top:2044.63px;font-size:30.72px;color:#222;transform:scaleX(0.9600);">0</div>
<div style="position:absolute;left:3353.34px;top:2141.50px;width:39.40px;height:39.40px;background:#fff;border:2.5px solid #d9d9d9;border-radius:6px;box-sizing:border-box"></div>
<div style="position:absolute;left:3353.34px;top:2243.60px;width:39.40px;height:39.40px;background:#fff;border:2.5px solid #d9d9d9;border-radius:6px;box-sizing:border-box"></div>
<svg style="position:absolute;left:0;top:0" width="3626" height="2356" viewBox="0 0 3626 2356">
<path fill-rule="evenodd" fill="#000" d="M0 0 H3626 V2356 H0 Z M3 -40 H3622 V2312 A40 40 0 0 1 3582 2352 H43 A40 40 0 0 1 3 2312 Z"/>
<path fill-rule="evenodd" fill="#fff" d="M3 -40 H3622 V2312 A40 40 0 0 1 3582 2352 H43 A40 40 0 0 1 3 2312 Z M7 -40 H3614 V2310 A34 34 0 0 1 3580 2344 H41 A34 34 0 0 1 7 2310 Z"/>
<path fill-rule="evenodd" fill="#dad6d6" d="M7 -40 H3614 V2310 A34 34 0 0 1 3580 2344 H41 A34 34 0 0 1 7 2310 Z M20 0 H3606 V2286 A30 30 0 0 1 3576 2316 H50 A30 30 0 0 1 20 2286 Z"/>
<path fill="#dad6d6" d="M20 0 H48 C34 3 23 13 20 27 Z"/>
<path fill="#fff" d="M0 0 H46 C30 8 12 22 6 40 C4.5 47 3 54 3 62 L7 62 C7 54 8.5 47 10 40 C16 24 32 10 48 0 Z"/>
<path fill="#000" d="M0 0 H46 C30 8 12 22 6 40 C4.5 47 3 54 3 62 L0 62 Z"/>
<path fill="#dad6d6" d="M3606 0 H3574 C3590 3 3603 13 3606 27 Z"/>
<path fill="#fff" d="M3626 0 H3578 C3590 4 3601 12 3609 20 C3616 28 3622 36 3622 44 L3614 44 C3613 36 3608 28 3602 20 C3594 11 3586 4 3574 0 Z"/>
<path fill="#000" d="M3626 0 H3578 C3590 4 3601 12 3609 20 C3616 28 3622 36 3622 44 L3626 44 Z"/>
</svg>
</body></html>
